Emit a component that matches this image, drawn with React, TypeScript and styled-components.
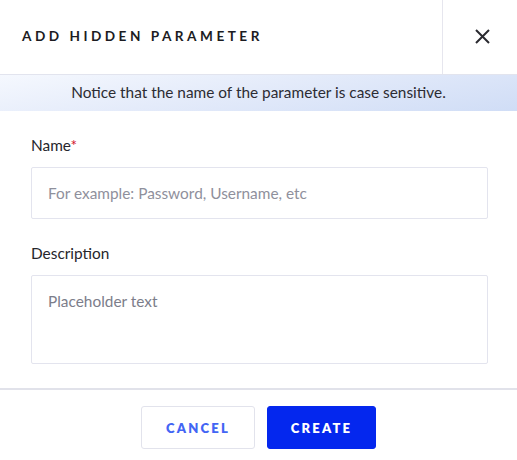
import React from "react";
import styled, { createGlobalStyle } from "styled-components";

const Global = createGlobalStyle`
  html, body { margin: 0; padding: 0; background: #fff; }
  body { font-family: Lato, "Open Sans", sans-serif; color: #222; }
  * { box-sizing: border-box; }
`;

const Dialog = styled.div`
  width: 517px;
  height: 460px;
  background: #fff;
  display: flex;
  flex-direction: column;
  overflow: hidden;
`;

const Header = styled.div`
  height: 75px;
  display: flex;
  align-items: stretch;
  border-bottom: 1px solid #e2e4ee;
`;

const Title = styled.h1`
  flex: 1;
  margin: 0;
  padding: 0 0 2px 22px;
  display: flex;
  align-items: center;
  font-size: 13.6px;
  font-weight: 700;
  letter-spacing: 3.5px;
  color: #1c1c22;
`;

const CloseButton = styled.button`
  width: 75px;
  border: none;
  border-left: 1px solid #e6e6ee;
  background: transparent;
  display: flex;
  align-items: center;
  justify-content: center;
  padding: 0 0 2px 4px;
  cursor: pointer;
`;

const Notice = styled.div`
  height: 36px;
  display: flex;
  align-items: center;
  justify-content: center;
  font-size: 15.4px;
  color: #2c2c33;
  padding-bottom: 2px;
  background: linear-gradient(170deg, #f5f8fe 0%, #e4ebfa 45%, #d0ddf6 100%);
`;

const Body = styled.div`
  padding: 24px 29px 24px 31px;
  display: flex;
  flex-direction: column;
  flex: 1;
`;

const Field = styled.div<{ $mb?: number }>`
  display: flex;
  flex-direction: column;
  margin-bottom: ${(p) => p.$mb ?? 0}px;
`;

const Label = styled.label`
  font-size: 15.4px;
  color: #26262c;
  height: 20px;
  line-height: 20px;
  margin-bottom: 12px;
`;

const Req = styled.span`
  color: #d0122b;
`;

const Input = styled.input`
  height: 52px;
  border: 1.5px solid #e3e4ee;
  border-radius: 2px;
  padding: 0 16px;
  font-family: inherit;
  font-size: 15.4px;
  color: #222;
  outline: none;
  &::placeholder { color: #8f909c; }
`;

const TextArea = styled.textarea`
  height: 89px;
  border: 1.5px solid #e3e4ee;
  border-radius: 2px;
  padding: 16px 16px;
  font-family: inherit;
  font-size: 15.4px;
  resize: none;
  outline: none;
  &::placeholder { color: #7c7d8a; }
`;

const Footer = styled.div`
  border-top: 2px solid #e1e2ea;
  height: 72px;
  display: flex;
  justify-content: center;
  align-items: flex-start;
  padding-top: 16px;
  gap: 12px;
`;

const Button = styled.button<{ $primary?: boolean }>`
  height: 43px;
  width: ${(p) => (p.$primary ? 109 : 114)}px;
  border-radius: 3px;
  font-family: inherit;
  font-size: 13px;
  font-weight: 800;
  letter-spacing: 2.2px;
  cursor: pointer;
  border: ${(p) => (p.$primary ? "1px solid #0427ee" : "1.5px solid #e2e3ec")};
  background: ${(p) => (p.$primary ? "#0427ee" : "#fff")};
  color: ${(p) => (p.$primary ? "#fff" : "#4365f4")};
`;

export default function App() {
  return (
    <>
      <Global />
      <Dialog>
        <Header>
          <Title>ADD HIDDEN PARAMETER</Title>
          <CloseButton aria-label="Close">
            <svg width="15" height="15" viewBox="0 0 15 15">
              <path d="M1 1L14 14M14 1L1 14" stroke="#2a2a30" strokeWidth="2" />
            </svg>
          </CloseButton>
        </Header>
        <Notice>Notice that the name of the parameter is case sensitive.</Notice>
        <Body>
          <Field $mb={24}>
            <Label>
              Name<Req>*</Req>
            </Label>
            <Input placeholder="For example: Password, Username, etc" />
          </Field>
          <Field>
            <Label>Description</Label>
            <TextArea placeholder="Placeholder text" />
          </Field>
        </Body>
        <Footer>
          <Button>CANCEL</Button>
          <Button $primary>CREATE</Button>
        </Footer>
      </Dialog>
    </>
  );
}
